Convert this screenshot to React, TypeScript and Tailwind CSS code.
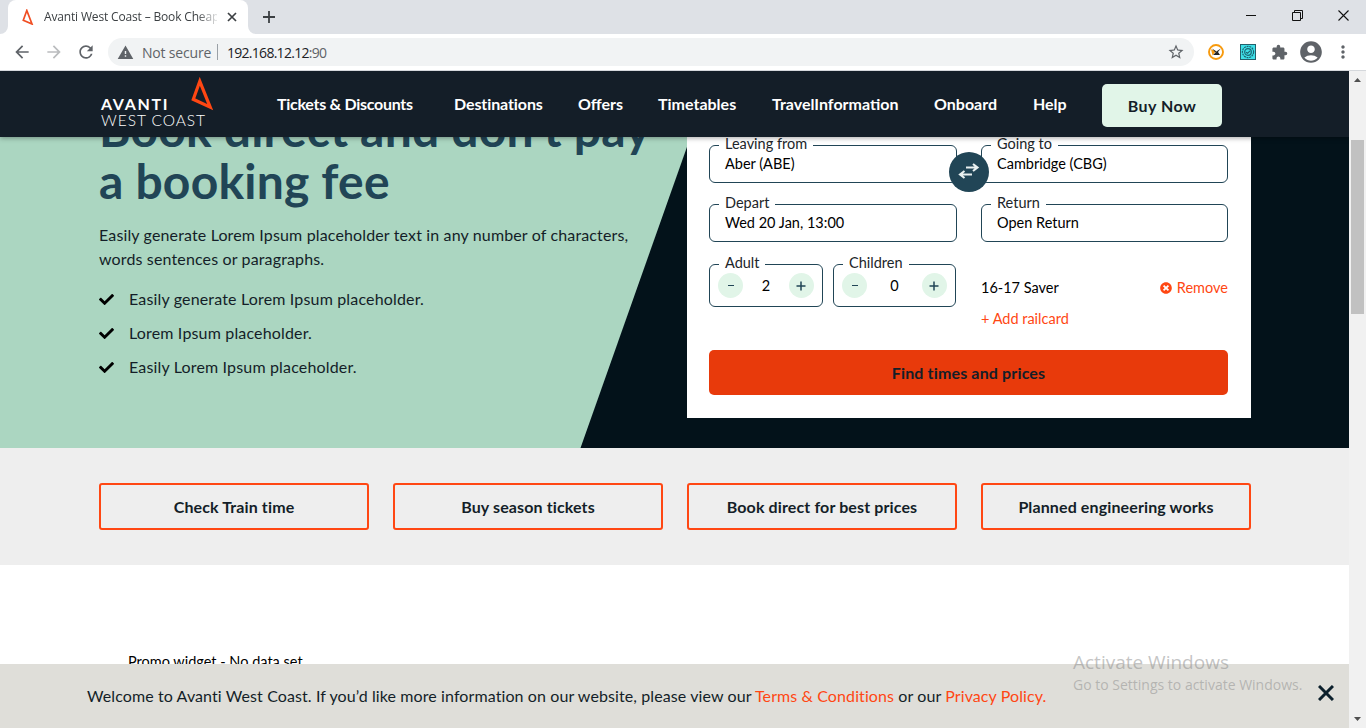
import React from 'react';
import { FaCheck, FaTimesCircle } from 'react-icons/fa';
import { MdArrowBack, MdArrowForward, MdRefresh, MdWarning, MdStarBorder, MdExtension, MdAccountCircle, MdMoreVert } from 'react-icons/md';

function Tabs() {
  return (
    <div className="flex h-[34px] shrink-0 items-end bg-[#dee1e6]">
      <svg className="h-2 w-2" viewBox="0 0 8 8"><path d="M8 0V8H0A8 8 0 0 0 8 0Z" fill="#fff" /></svg>
      <div className="flex h-[34px] w-[240px] items-center rounded-t-lg bg-white pl-[13px]">
        <svg className="h-4 w-[14px]" viewBox="0 0 14 16"><path d="M5.8 1.5L2.3 11.2L11 15Z" fill="none" stroke="#f04e23" strokeWidth="1.7" /></svg>
        <span className="ml-[9px] w-[173px] overflow-hidden font-['Open_Sans',sans-serif] text-[12px] tracking-[-0.16px] whitespace-nowrap text-[#3c4043] [mask-image:linear-gradient(to_right,#000_88%,transparent_102%)]">Avanti West Coast – Book Cheap</span>
        <svg className="ml-[10px] h-[10px] w-[10px]" viewBox="0 0 10 10"><path d="M1 1L9 9M9 1L1 9" stroke="#3c4043" strokeWidth="1.7" /></svg>
      </div>
      <svg className="h-2 w-2" viewBox="0 0 8 8"><path d="M0 0V8H8A8 8 0 0 1 0 0Z" fill="#fff" /></svg>
      <svg className="mb-[11px] ml-[7px] h-3 w-3" viewBox="0 0 12 12"><path d="M6 0V12M0 6H12" stroke="#3c4043" strokeWidth="1.8" /></svg>
      <div className="mb-[13px] ml-auto flex items-center pr-[17px]">
        <svg className="h-[12px] w-[10px]" viewBox="0 0 10 12"><path d="M0 6.5H10" stroke="#111" /></svg>
        <svg className="ml-[36px] h-[11px] w-[11px]" viewBox="0 0 11 11"><path d="M.5 2.5H8.5V10.5H.5ZM2.5 2.5V.5H10.5V8.5H8.5" fill="none" stroke="#111" /></svg>
        <svg className="ml-[35px] h-[11px] w-[11px]" viewBox="0 0 11 11"><path d="M.5 .5L10.5 10.5M10.5 .5L.5 10.5" stroke="#111" strokeWidth="1.1" /></svg>
      </div>
    </div>
  );
}

function Toolbar() {
  return (
    <div className="flex h-[37px] shrink-0 items-center border-b border-[#d5d8dc] bg-white pl-[12px] font-['Open_Sans',sans-serif] text-[#5f6368]">
      <MdArrowBack className="size-5" />
      <MdArrowForward className="ml-3 size-5 text-[#babcbe]" />
      <MdRefresh className="ml-3 size-5" />
      <div className="ml-3 flex h-7 w-[1086px] items-center rounded-full bg-[#f1f3f4] pl-[9px]">
        <MdWarning className="size-[17px]" />
        <span className="ml-[8px] w-[68px] text-[14px] tracking-[-0.18px] whitespace-nowrap">Not secure</span>
        <span className="ml-[7px] h-4 w-px bg-[#9aa0a6]" />
        <span className="ml-[9px] text-[14px] tracking-[-0.72px] whitespace-nowrap"><span className="text-[#202124]">192.168.12.12</span>:90</span>
        <MdStarBorder className="mr-[9px] ml-auto size-[18px]" />
      </div>
      <svg className="ml-[14px] size-4" viewBox="0 0 16 16"><circle cx="8" cy="8" r="7" fill="#fff" stroke="#f79a0e" strokeWidth="1.9" /><path d="M3 5.3L8 7L4.5 11.5Z" fill="#f79a0e" /><path d="M4 4.5L7.2 8.3L12.8 4.5L10 8L12 11H5L8.5 7.5" fill="#262626" /></svg>
      <svg className="ml-4 size-4" viewBox="0 0 16 16"><rect x=".5" y=".5" width="15" height="15" fill="#3fe0e8" stroke="#24606b" /><g fill="none" stroke="#1c6572" strokeWidth="1.2"><circle cx="8" cy="8" r="5.6" strokeDasharray="2 .7" /><circle cx="8" cy="8" r="3.3" /><path d="M6 8.2L7.5 9.3L10 6.8" /></g></svg>
      <MdExtension className="ml-[15px] size-[17px]" />
      <MdAccountCircle className="ml-[10px] size-[26px]" />
      <MdMoreVert className="ml-[9px] size-5" />
    </div>
  );
}

function Header() {
  return (
    <header className="z-10 flex h-[66px] shrink-0 items-center bg-[#141e28] pl-[101px] text-[16px] font-bold text-white shadow-[0_1px_5px_rgba(0,0,0,0.35)]">
      <div className="relative flex h-[66px] w-[112px] flex-col pt-[25px] text-[16px] leading-4">
        <span className="tracking-[1.65px]">AVANTI</span>
        <span className="text-[15.5px] font-light tracking-[0.95px] whitespace-nowrap">WEST COAST</span>
        <svg className="absolute top-[6px] left-[89px] h-[34px] w-[24px]" viewBox="0 0 24 34"><path d="M9.8 4.3L3.3 22.3L20.2 30.1Z" fill="none" stroke="#ff4713" strokeWidth="3.2" /></svg>
      </div>
      <nav className="flex flex-1 items-center whitespace-nowrap">
        <a className="ml-[64px] w-[144px] tracking-[-0.28px]">Tickets &amp; Discounts</a>
        <a className="ml-[33px] w-[92px] tracking-[-0.1px]">Destinations</a>
        <a className="ml-[32px] w-[47px]">Offers</a>
        <a className="ml-[33px] w-[81px]">Timetables</a>
        <a className="ml-[33px] w-[129px]">TravelInformation</a>
        <a className="ml-[33px] w-[67px]">Onboard</a>
        <a className="ml-[32px] w-[35px]">Help</a>
        <a className="mt-[3px] ml-[34px] flex h-[43px] w-[120px] items-center justify-center rounded-[5px] bg-[#e1f5e8] tracking-[0.45px] text-[#141e28]">Buy Now</a>
      </nav>
    </header>
  );
}

function Field({ label, value, track }: { label: string; value: string; track: string }) {
  return (
    <div className="relative h-[38px] rounded-[6px] border border-[#214556] pt-[8px] pl-[15px] text-[14.5px] leading-5 text-black">
      <span className="absolute top-[-12px] left-[9px] bg-white px-[6px] text-[#212529]">{label}</span>
      <span className={track}>{value}</span>
    </div>
  );
}

function Counter({ label, value, width }: { label: string; value: string; width: string }) {
  return (
    <div className={`relative flex h-[43px] items-center justify-between rounded-[6px] border border-[#214556] px-2 text-[14.5px] leading-5 ${width}`}>
      <span className="absolute top-[-12px] left-[9px] bg-white px-[6px] text-[#212529]">{label}</span>
      <button className="flex size-[25px] items-center justify-center rounded-full bg-[#e1f5e8]"><span className="h-[1.5px] w-[6px] bg-[#214556]" /></button>
      <span>{value}</span>
      <button className="flex size-[25px] items-center justify-center rounded-full bg-[#e1f5e8]">
        <svg className="size-[10px]" viewBox="0 0 10 10"><path d="M5 .5V9.5M.5 5H9.5" stroke="#214556" strokeWidth="1.5" /></svg>
      </button>
    </div>
  );
}

const bullets = [
  ['Easily generate Lorem Ipsum placeholder.', 'tracking-[0.16px]'],
  ['Lorem Ipsum placeholder.', 'tracking-[0.16px]'],
  ['Easily Lorem Ipsum placeholder.', 'tracking-[0.16px]'],
];

function Hero() {
  return (
    <section className="relative flex h-[311px] shrink-0 overflow-hidden bg-[#03121a]">
      <svg className="absolute inset-0 h-full w-full" viewBox="0 0 1349 311"><path d="M0 0H690.5L580.5 311H0Z" fill="#abd6c1" /></svg>
      <div className="relative w-[687px] shrink-0 pl-[99px]">
        <h1 className="mt-[-34px] text-[48px] leading-[52px] font-bold whitespace-nowrap text-[#214556]">
          <span className="block tracking-[0.2px]">Book direct and don’t pay</span>
          <span className="block tracking-[0.2px]">a booking fee</span>
        </h1>
        <p className="mt-[16px] text-[16px] leading-6 whitespace-nowrap text-[#141e28]">
          <span className="block tracking-[0.14px]">Easily generate Lorem Ipsum placeholder text in any number of characters,</span>
          <span className="block tracking-[0.14px]">words sentences or paragraphs.</span>
        </p>
        <ul className="mt-[16px] flex flex-col gap-[10px] text-[16px] leading-6 text-[#141e28]">
          {bullets.map(([text, track]) => (
            <li key={text} className="flex items-center"><FaCheck className="mr-[15px] size-[15px] text-black" /><span className={track}>{text}</span></li>
          ))}
        </ul>
      </div>
      <div className="relative h-[281px] w-[564px] bg-white pt-[8px] pr-[23px] pl-[22px]">
        <div className="grid grid-cols-[248px_247px] gap-x-6 gap-y-[21px]">
          <Field label="Leaving from" value="Aber (ABE)" track="tracking-normal" />
          <Field label="Going to" value="Cambridge (CBG)" track="tracking-normal" />
          <Field label="Depart" value="Wed 20 Jan, 13:00" track="tracking-normal" />
          <Field label="Return" value="Open Return" track="tracking-normal" />
        </div>
        <button className="absolute top-[15px] left-[262px] flex size-10 items-center justify-center rounded-full bg-[#214556]">
          <svg className="mb-[3px] h-[18px] w-[22px]" viewBox="0 0 22 18"><path d="M8 5.5H18M15 2L19.5 5.5L15 9M14 12.5H3.5M6.5 9L2 12.5L6.5 16" fill="none" stroke="#e9f0f0" strokeWidth="2.1" /></svg>
        </button>
        <div className="mt-[22px] flex text-[14.5px] leading-5">
          <Counter label="Adult" value="2" width="w-[114px]" />
          <div className="w-[10px]" />
          <Counter label="Children" value="0" width="w-[123px]" />
          <div className="ml-[25px] w-[247px] pt-[14px]">
            <div className="flex items-center justify-between"><span>16-17 Saver</span><span className="flex items-center gap-[5px] text-[#ff4713]"><FaTimesCircle className="size-3" />Remove</span></div>
            <div className="mt-[11px] text-[#ff4713]">+ Add railcard</div>
          </div>
        </div>
        <button className="mt-[21px] h-[45px] w-[519px] rounded-[5px] bg-[#e83a0b] text-[16px] font-bold tracking-[0.15px] text-[#141e28]">Find times and prices</button>
      </div>
    </section>
  );
}

const links = ['Check Train time', 'Buy season tickets', 'Book direct for best prices', 'Planned engineering works'];

export default function App() {
  return (
    <div className="flex h-[728px] w-[1366px] flex-col overflow-hidden bg-white font-[Lato,sans-serif]">
      <Tabs />
      <Toolbar />
      <div className="flex h-[657px]">
        <main className="relative flex w-[1349px] flex-col overflow-hidden">
          <Header />
          <Hero />
          <section className="grid h-[117px] shrink-0 grid-cols-[repeat(4,270px)] gap-6 bg-[#eeeeee] pt-[35px] pl-[99px]">
            {links.map((link) => (
              <a key={link} className="flex h-[47px] items-center justify-center rounded-[3px] border-2 border-[#ff4713] text-[16px] font-bold tracking-[0.12px] whitespace-nowrap text-[#141e28]">{link}</a>
            ))}
          </section>
          <section className="h-[99px] shrink-0 overflow-hidden pt-[87px] pl-[128px] text-[14.5px] leading-5 text-black">Promo widget - No data set</section>
          <footer className="flex h-16 shrink-0 items-center bg-[#dfded9] pl-[87px] text-[16px] whitespace-nowrap text-[#141e28]">
            <p className="tracking-[0.1px]">Welcome to Avanti West Coast. If you’d like more information on our website, please view our <span className="text-[#ff4713]">Terms &amp; Conditions</span> or our <span className="text-[#ff4713]">Privacy Policy.</span></p>
            <svg className="mr-[15px] mb-[6px] ml-auto size-4" viewBox="0 0 16 16"><path d="M1 1L15 15M15 1L1 15" stroke="#0c202c" strokeWidth="3" /></svg>
          </footer>
          <div className="absolute top-[580px] left-[1073px] font-['Open_Sans',sans-serif] whitespace-nowrap text-[#8a8a8a]/50">
            <div className="text-[19px] leading-[23px]">Activate Windows</div>
            <div className="text-[14px] leading-[22px]">Go to Settings to activate Windows.</div>
          </div>
        </main>
        <div className="flex w-[17px] flex-col items-center justify-between bg-[#f1f1f1] py-[7px]">
          <svg className="h-1 w-[7px]" viewBox="0 0 7 4"><path d="M0 4L3.5 0L7 4Z" fill="#505050" /></svg>
          <div className="mb-auto mt-[58px] h-[174px] w-[13px] bg-[#c1c1c1]" />
          <svg className="h-1 w-[7px]" viewBox="0 0 7 4"><path d="M0 0H7L3.5 4Z" fill="#505050" /></svg>
        </div>
      </div>
    </div>
  );
}
